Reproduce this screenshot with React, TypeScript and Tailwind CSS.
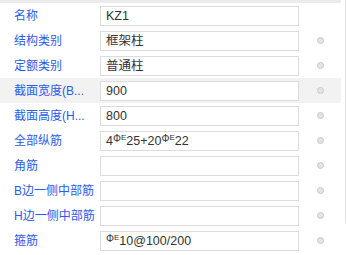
import React from "react";

const Rebar = () => (
  <span className="inline-flex items-start self-start mt-[2px] leading-none">
    <span className="text-[10px] leading-none">Φ</span>
    <span className="text-[8px] leading-none">E</span>
  </span>
);

type Row = { label: string; value: React.ReactNode; dot: boolean; hl?: boolean };

const rows: Row[] = [
  { label: "名称", value: "KZ1", dot: false },
  { label: "结构类别", value: "框架柱", dot: true },
  { label: "定额类别", value: "普通柱", dot: true },
  { label: "截面宽度(B...", value: "900", dot: true, hl: true },
  { label: "截面高度(H...", value: "800", dot: true },
  {
    label: "全部纵筋",
    value: (
      <>
        <span>4</span>
        <Rebar />
        <span>25+20</span>
        <Rebar />
        <span>22</span>
      </>
    ),
    dot: true,
  },
  { label: "角筋", value: "", dot: true },
  { label: "B边一侧中部筋", value: "", dot: true },
  { label: "H边一侧中部筋", value: "", dot: true },
  {
    label: "箍筋",
    value: (
      <>
        <Rebar />
        <span>10@100/200</span>
      </>
    ),
    dot: true,
  },
];

export default function App() {
  return (
    <div
      className="w-[347px] h-[255px] bg-white flex overflow-hidden"
      style={{ fontFamily: '"Liberation Sans", "Noto Sans CJK SC", sans-serif' }}
    >
      <div className="w-[341px] flex flex-col">
        <div className="h-[3px] bg-[#ebebeb]" />
        {rows.map((r, i) => (
          <div
            key={i}
            className={`h-[25px] flex items-center ${r.hl ? "bg-[#f2f2f2]" : ""}`}
          >
            <div className="w-[100px] pl-[14px] text-[12px] text-[#2b5be9] whitespace-nowrap leading-[16px]">
              {r.label}
            </div>
            <div className="w-[199px] h-[20px] border border-[#dcdcdc] bg-white flex items-center pl-[5px] text-[12.5px] text-[#333] leading-[16px] whitespace-nowrap">
              {r.value}
            </div>
            <div className="flex-1 flex items-center justify-center pl-[1px]">
              {r.dot && (
                <div className="w-[7px] h-[7px] rounded-full bg-[#e3e3e3] border border-[#c9c9c9]" />
              )}
            </div>
          </div>
        ))}
      </div>
      <div className="w-[6px] flex">
        <div className="ml-[4px] w-[1px] h-[223px] bg-[#e2e2e2]" />
      </div>
    </div>
  );
}
